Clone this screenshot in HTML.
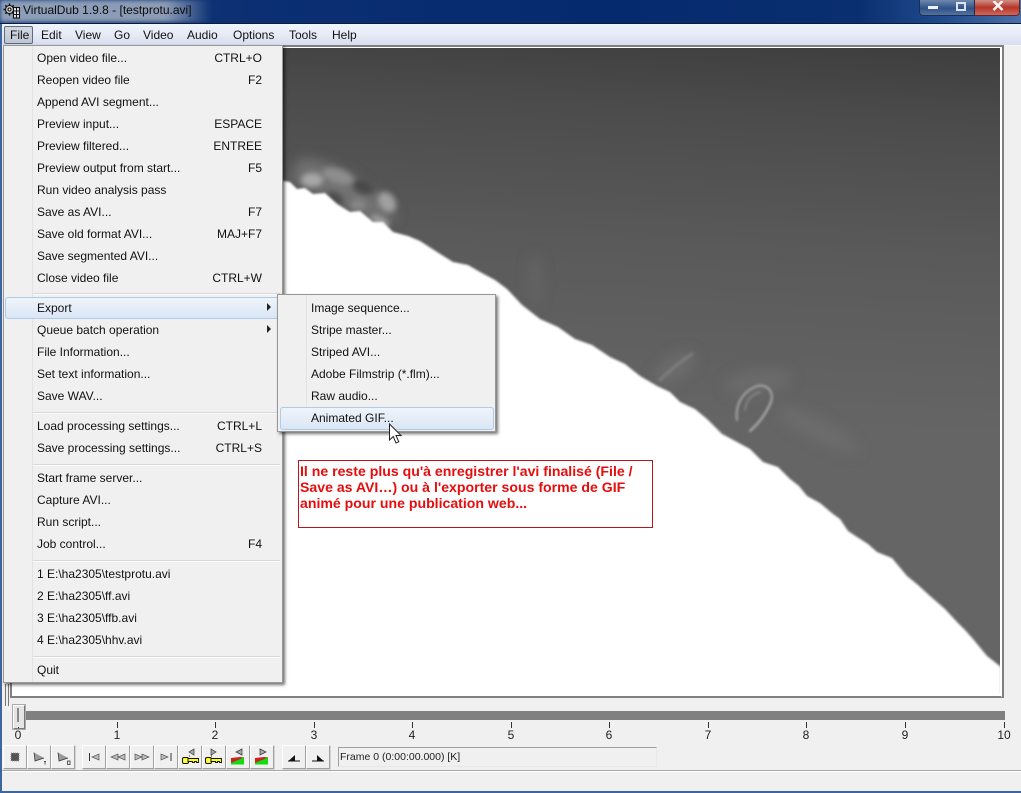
<!DOCTYPE html>
<html><head><meta charset="utf-8"><title>VirtualDub 1.9.8</title>
<style>
html,body{margin:0;padding:0;width:1021px;height:793px;overflow:hidden;background:#f0f0f0}
body{position:relative;font-family:"Liberation Sans",sans-serif;font-size:12px;color:#111}
div,span,svg{position:absolute}
.t{white-space:nowrap;line-height:14px;height:14px}
.r{white-space:nowrap;line-height:14px;height:14px;right:759px}
.m{top:28px;line-height:14px;white-space:nowrap;color:#111}
.sep{left:33px;width:247px;height:1px;background:#d9d9d9;border-bottom:1px solid #fbfbfb}
.n{top:728px;line-height:14px;width:14px;text-align:center;color:#222}
.k{top:722px;width:1px;height:6px;background:#333}
.b{top:745px;width:22px;height:22px;background:#f0f0f0;border:1px solid;border-color:#fff #a0a0a0 #a0a0a0 #fff;box-shadow:1px 1px 0 #d4d4d4}
.b svg{left:0;top:0}
</style></head><body>

<!-- title bar -->
<div style="left:0;top:0;width:1021px;height:24px;background:linear-gradient(90deg,#123a7c 0,#0b2f72 25%,#052a6e 60%,#0a2f70 84%,#1f4a8c 92%,#4a6ea8 100%)"></div>
<div style="left:0;top:0;width:212px;height:22px;background:linear-gradient(90deg,#8e9fb8 0,#8c9bb6 78%,rgba(120,140,175,0) 100%);filter:blur(2px)"></div>
<svg style="left:3px;top:2px" width="18" height="18" viewBox="0 0 18 18"><g fill="none" stroke="#111" stroke-width="1.1"><circle cx="6.500" cy="7.500" r="4" fill="#ccc"/><circle cx="6.500" cy="7.500" r="1.500" fill="#fff"/><path d="M6.500 1.500V3.500M6.500 11.500V13.500M.5 7.500H2.500M2.300 3.300L3.700 4.700M9.300 10.300L10.700 11.700M2.300 11.700L3.700 10.300M9.300 4.700L10.700 3.300" stroke-width="1.500"/><rect x="10.500" y="5.500" width="6" height="10.500" fill="#eee"/><path d="M10.500 9H16.500M10.500 12.500H16.500M13.500 5.500V16"/></g></svg>
<div class="t" style="left:23px;top:3px;color:#0c0c0c;font-size:12px">VirtualDub 1.9.8 - [testprotu.avi]</div>
<!-- caption buttons -->
<div style="left:919px;top:-1px;width:28px;height:15px;background:linear-gradient(#6f87ad,#2f5288 55%,#54729f);border:1px solid #1c2f50;border-radius:0 0 0 4px"></div>
<div style="left:948px;top:-1px;width:26px;height:15px;background:linear-gradient(#6f87ad,#2f5288 55%,#54729f);border:1px solid #1c2f50;border-left:0"></div>
<div style="left:975px;top:-1px;width:44px;height:15px;background:linear-gradient(#cf8f85,#b8352a 50%,#cc6a5c);border:1px solid #5a2a30;border-left:0;border-radius:0 0 4px 0"></div>
<div style="left:928px;top:6px;width:10px;height:3px;background:#eef2f8"></div>
<div style="left:956px;top:2px;width:6px;height:5px;border:2px solid #dde4ef"></div>
<svg style="left:992px;top:1px" width="12" height="10" viewBox="0 0 12 10"><path d="M1.500 0L10.500 9M10.500 0L1.500 9" stroke="#f4f4f4" stroke-width="2.600"/></svg>

<!-- window frame -->
<div style="left:0;top:23px;width:1021px;height:1px;background:#0c1c3c"></div>
<div style="left:0;top:24px;width:2px;height:769px;background:#3d659e"></div>
<div style="left:0;top:791px;width:1021px;height:2px;background:#3d659e"></div>
<div style="left:2px;top:24px;width:1019px;height:21px;background:linear-gradient(#f1f4fc,#e6ebf7 50%,#d6ddee)"></div>
<div style="left:2px;top:45px;width:1019px;height:1px;background:#f6f6f6"></div>
<div style="left:4px;top:26px;width:27px;height:16px;border:1px solid #5f6a7c;border-radius:2px;background:linear-gradient(#d3d9e4,#bfc6d4)"></div>
<div class="m" style="left:10px">File</div>
<div class="m" style="left:41px">Edit</div>
<div class="m" style="left:75px">View</div>
<div class="m" style="left:114px">Go</div>
<div class="m" style="left:143px">Video</div>
<div class="m" style="left:187px">Audio</div>
<div class="m" style="left:233px">Options</div>
<div class="m" style="left:289px">Tools</div>
<div class="m" style="left:332px">Help</div>

<!-- video pane -->
<svg style="left:0;top:0" width="1021" height="793" viewBox="0 0 1021 793">
<defs>
<linearGradient id="g" gradientUnits="userSpaceOnUse" x1="700" y1="420" x2="720" y2="40">
<stop offset="0" stop-color="#656565"/><stop offset=".45" stop-color="#5a5a5a"/><stop offset=".8" stop-color="#4c4c4c"/><stop offset="1" stop-color="#3f3f3f"/>
</linearGradient>
<filter id="b1" x="-20%" y="-20%" width="140%" height="140%"><feGaussianBlur stdDeviation="1"/></filter>
<filter id="b15" x="-40%" y="-40%" width="180%" height="180%"><feGaussianBlur stdDeviation="1.300"/></filter>
<filter id="b3" x="-50%" y="-50%" width="200%" height="200%"><feGaussianBlur stdDeviation="3"/></filter>
<filter id="b2" x="-20%" y="-20%" width="140%" height="140%"><feGaussianBlur stdDeviation="2.500"/></filter>
<filter id="b4" x="-40%" y="-40%" width="180%" height="180%"><feGaussianBlur stdDeviation="6"/></filter>
<clipPath id="c"><rect x="14" y="48" width="986" height="645"/></clipPath>
</defs>
<rect x="11" y="46" width="992" height="651" fill="#fff" stroke="#808080" stroke-width="2"/>
<g clip-path="url(#c)">
<rect x="14" y="48" width="986" height="645" fill="url(#g)"/>
<!-- broad surface detail -->
<g filter="url(#b4)">
<path d="M300 158C330 160 365 178 398 216L375 225C345 205 320 195 290 180Z" fill="#727272"/>
<ellipse cx="535" cy="280" rx="7" ry="26" fill="#646464"/>
<ellipse cx="675" cy="368" rx="24" ry="12" fill="#6c6c6c" transform="rotate(-35 675 368)"/>
<ellipse cx="818" cy="430" rx="46" ry="11" fill="#6c6c6c" transform="rotate(28 818 430)"/>
<ellipse cx="758" cy="382" rx="34" ry="13" fill="#6b6b6b" transform="rotate(-8 758 382)"/>
</g>
<g filter="url(#b3)">
<ellipse cx="312" cy="180" rx="11" ry="7" fill="#a8a8a8"/>
<ellipse cx="338" cy="176" rx="16" ry="7" fill="#8e8e8e" transform="rotate(18 338 176)"/>
<ellipse cx="387" cy="202" rx="8" ry="11" fill="#a0a0a0" transform="rotate(-35 387 202)"/>
<ellipse cx="380" cy="221" rx="10" ry="4" fill="#a4a4a4" transform="rotate(25 380 221)"/>
<ellipse cx="358" cy="205" rx="8" ry="6" fill="#868686"/>
<ellipse cx="363" cy="187" rx="11" ry="7" fill="#4a4a4a" transform="rotate(20 363 187)"/>
<ellipse cx="335" cy="198" rx="9" ry="5" fill="#4c4c4c" transform="rotate(30 335 198)"/>
</g>
<g filter="url(#b15)" fill="none" stroke-linecap="round">
<path d="M737 420C735 405 742 392 757 386C768 384 774 392 771 402" stroke="#a8a8a8" stroke-width="2"/>
<path d="M771 402C766 414 758 424 750 431" stroke="#b4b4b4" stroke-width="2"/>
<path d="M745 410C746 400 752 394 760 392" stroke="#858585" stroke-width="2"/>
<path d="M660 380C668 372 680 362 692 354" stroke="#7e7e7e" stroke-width="3"/>
</g>
<!-- sun disk -->
<path d="M0 170L283 180L297 190L313 195L337 205L350 213L373 223L393 233L420 242L437 253L453 263L480 273L507 290L540 320L575 340L610 358L640 377L657 387L680 403L707 420L737 443L763 463L790 480L807 497L833 515L840 520L857 538L877 553L907 577L930 597L957 623L973 640L987 657L1001 668L1001 700L0 700Z" fill="#7a7a7a" filter="url(#b2)" opacity=".35"/>
<path d="M0 172L283 181L290 182L297 189L305 188L313 194L325 193L337 204L350 212L360 211L373 222L383 222L393 232L408 236L420 241L437 252L453 262L468 265L480 272L495 280L507 289L522 305L540 319L558 327L575 339L592 345L610 357L625 364L640 376L657 386L670 392L680 402L695 409L707 419L722 434L737 442L750 449L763 462L778 467L790 479L799 486L807 496L820 503L833 514L840 519L848 531L857 537L868 544L877 552L892 558L907 576L918 585L930 596L945 609L957 622L965 630L973 639L987 656L1001 667L1001 700L0 700Z" fill="#fff" filter="url(#b1)"/>
</g>
<rect x="1001" y="47" width="1" height="650" fill="#fff" opacity=".6"/>
</svg>
<div style="left:5px;top:684px;width:1px;height:22px;background:#777"></div>
<div style="left:8px;top:684px;width:1px;height:22px;background:#777"></div>

<!-- annotation -->
<div style="left:298px;top:460px;width:353px;height:66px;background:#fff;border:1px solid #b8141a"></div>
<div style="left:300px;top:463px;width:350px;color:#e60d0d;font-weight:bold;font-size:14.100px;line-height:16px;white-space:nowrap">Il ne reste plus qu'à enregistrer l'avi finalisé (File /<br>Save as AVI…) ou à l'exporter sous forme de GIF<br>animé pour une publication web...</div>

<!-- File menu -->
<div style="left:3px;top:45px;width:278px;height:636px;background:#f0f0f0;border:1px solid #979797;box-shadow:2px 2px 3px rgba(0,0,0,.55)"></div>
<div style="left:32px;top:46px;width:1px;height:636px;background:#e2e3e3"></div>
<div class="sep" style="top:293px"></div>
<div class="sep" style="top:412px"></div>
<div class="sep" style="top:464px"></div>
<div class="sep" style="top:560px"></div>
<div class="sep" style="top:656px"></div>
<div style="left:5px;top:297px;width:272px;height:20px;border:1px solid #aecbe8;border-radius:3px;background:linear-gradient(#eff4fb,#dbe6f5)"></div>

<div class="t" style="left:37px;top:51px">Open video file...</div><div class="r" style="top:51px">CTRL+O</div>
<div class="t" style="left:37px;top:73px">Reopen video file</div><div class="r" style="top:73px">F2</div>
<div class="t" style="left:37px;top:95px">Append AVI segment...</div>
<div class="t" style="left:37px;top:117px">Preview input...</div><div class="r" style="top:117px">ESPACE</div>
<div class="t" style="left:37px;top:139px">Preview filtered...</div><div class="r" style="top:139px">ENTREE</div>
<div class="t" style="left:37px;top:161px">Preview output from start...</div><div class="r" style="top:161px">F5</div>
<div class="t" style="left:37px;top:183px">Run video analysis pass</div>
<div class="t" style="left:37px;top:205px">Save as AVI...</div><div class="r" style="top:205px">F7</div>
<div class="t" style="left:37px;top:227px">Save old format AVI...</div><div class="r" style="top:227px">MAJ+F7</div>
<div class="t" style="left:37px;top:249px">Save segmented AVI...</div>
<div class="t" style="left:37px;top:271px">Close video file</div><div class="r" style="top:271px">CTRL+W</div>
<div class="t" style="left:37px;top:301px">Export</div>
<div class="t" style="left:37px;top:323px">Queue batch operation</div>
<div class="t" style="left:37px;top:345px">File Information...</div>
<div class="t" style="left:37px;top:367px">Set text information...</div>
<div class="t" style="left:37px;top:389px">Save WAV...</div>
<div class="t" style="left:37px;top:419px">Load processing settings...</div><div class="r" style="top:419px">CTRL+L</div>
<div class="t" style="left:37px;top:441px">Save processing settings...</div><div class="r" style="top:441px">CTRL+S</div>
<div class="t" style="left:37px;top:471px">Start frame server...</div>
<div class="t" style="left:37px;top:493px">Capture AVI...</div>
<div class="t" style="left:37px;top:515px">Run script...</div>
<div class="t" style="left:37px;top:537px">Job control...</div><div class="r" style="top:537px">F4</div>
<div class="t" style="left:37px;top:567px">1 E:\ha2305\testprotu.avi</div>
<div class="t" style="left:37px;top:589px">2 E:\ha2305\ff.avi</div>
<div class="t" style="left:37px;top:611px">3 E:\ha2305\ffb.avi</div>
<div class="t" style="left:37px;top:633px">4 E:\ha2305\hhv.avi</div>
<div class="t" style="left:37px;top:663px">Quit</div>
<svg style="left:266px;top:303px" width="6" height="34" viewBox="0 0 6 34"><path d="M1 0L5 4L1 8ZM1 22L5 26L1 30Z" fill="#222"/></svg>

<!-- Export submenu -->
<div style="left:277px;top:294px;width:217px;height:136px;background:#f0f0f0;border:1px solid #979797;box-shadow:2px 2px 3px rgba(0,0,0,.55)"></div>
<div style="left:306px;top:295px;width:1px;height:135px;background:#e2e3e3"></div>
<div style="left:280px;top:407px;width:212px;height:21px;border:1px solid #aecbe8;border-radius:3px;background:linear-gradient(#eff4fb,#dbe6f5)"></div>
<div class="t" style="left:311px;top:301px">Image sequence...</div>
<div class="t" style="left:311px;top:323px">Stripe master...</div>
<div class="t" style="left:311px;top:345px">Striped AVI...</div>
<div class="t" style="left:311px;top:367px">Adobe Filmstrip (*.flm)...</div>
<div class="t" style="left:311px;top:389px">Raw audio...</div>
<div class="t" style="left:311px;top:411px">Animated GIF...</div>
<svg style="left:388px;top:423px" width="16" height="22" viewBox="0 0 16 22"><path d="M1.500 1V17L5.200 13.500L8 20L10.800 18.800L8 12.500H13Z" fill="#fff" stroke="#222" stroke-width="1"/></svg>

<!-- timeline -->
<div style="left:22px;top:711px;width:983px;height:9px;background:#808080"></div>
<div style="left:13px;top:705px;width:10px;height:22px;background:#e4e4e4;border:1px solid;border-color:#fff #777 #777 #fff;box-shadow:0 0 0 1px #aaa"></div>
<div style="left:17px;top:708px;width:2px;height:14px;background:#8a8a8a"></div>
<div class="k" style="left:18px;top:727px;height:1px"></div>
<div class="k" style="left:117px"></div><div class="k" style="left:215px"></div><div class="k" style="left:314px"></div><div class="k" style="left:412px"></div><div class="k" style="left:511px"></div><div class="k" style="left:609px"></div><div class="k" style="left:708px"></div><div class="k" style="left:806px"></div><div class="k" style="left:905px"></div><div class="k" style="left:1004px"></div>
<div class="n" style="left:11px">0</div><div class="n" style="left:110px">1</div><div class="n" style="left:208px">2</div><div class="n" style="left:307px">3</div><div class="n" style="left:405px">4</div><div class="n" style="left:504px">5</div><div class="n" style="left:602px">6</div><div class="n" style="left:701px">7</div><div class="n" style="left:799px">8</div><div class="n" style="left:898px">9</div><div class="n" style="left:995px;width:18px">10</div>

<!-- toolbar -->
<div class="b" style="left:3px"><svg width="22" height="22"><rect x="7" y="7" width="8" height="8" fill="#555" stroke="#999" stroke-dasharray="1 1"/></svg></div>
<div class="b" style="left:27px"><svg width="22" height="22"><path d="M6 6.500L16 12L7 15Z" fill="#999"/><path d="M6 6.500L7 15L16 12" fill="none" stroke="#333" stroke-width=".7"/><path d="M16 15.500H18M17 15.500V18.500" fill="none" stroke="#333" stroke-width=".8"/></svg></div>
<div class="b" style="left:51px"><svg width="22" height="22"><path d="M6 6.500L16 12L7 15Z" fill="#999"/><path d="M6 6.500L7 15L16 12" fill="none" stroke="#333" stroke-width=".7"/><rect x="15.500" y="15" width="2.500" height="3.500" fill="none" stroke="#333" stroke-width=".8"/></svg></div>
<div class="b" style="left:82px"><svg width="22" height="22"><path d="M6.500 7V15" stroke="#333"/><path d="M16 8V14L9 11Z" fill="#bbb" stroke="#555" stroke-width=".7"/></svg></div>
<div class="b" style="left:106px"><svg width="22" height="22"><path d="M11 8V14L4 11ZM18 8V14L11 11Z" fill="#bbb" stroke="#555" stroke-width=".7"/></svg></div>
<div class="b" style="left:130px"><svg width="22" height="22"><path d="M4 8V14L11 11ZM11 8V14L18 11Z" fill="#bbb" stroke="#555" stroke-width=".7"/></svg></div>
<div class="b" style="left:154px"><svg width="22" height="22"><path d="M6 8V14L13 11Z" fill="#bbb" stroke="#555" stroke-width=".7"/><path d="M16 7V15" stroke="#333"/></svg></div>
<div class="b" style="left:178px"><svg width="22" height="22"><path d="M15 3V9L10 6Z" fill="#aaa" stroke="#333" stroke-width=".7"/><path d="M10 10H11" stroke="#333"/><rect x="3.500" y="11.500" width="6" height="6" rx="1.500" fill="#ff0" stroke="#111"/><path d="M9 12.500H19.500V16.500H17.500V15.500H15.500V16.500H13.500V15.500H9Z" fill="#ff0" stroke="#111" stroke-width=".9"/><rect x="5.500" y="13.500" width="2" height="2" fill="#f0f0f0"/></svg></div>
<div class="b" style="left:202px"><svg width="22" height="22"><path d="M8 3V9L13 6Z" fill="#aaa" stroke="#333" stroke-width=".7"/><path d="M8 10H9" stroke="#333"/><rect x="2.500" y="11.500" width="6" height="6" rx="1.500" fill="#ff0" stroke="#111"/><path d="M8 12.500H18.500V16.500H16.500V15.500H14.500V16.500H12.500V15.500H8Z" fill="#ff0" stroke="#111" stroke-width=".9"/><rect x="4.500" y="13.500" width="2" height="2" fill="#f0f0f0"/></svg></div>
<div class="b" style="left:226px"><svg width="22" height="22"><path d="M15 3V9L9 6Z" fill="#aaa" stroke="#333" stroke-width=".7"/><path d="M4 18.500V15L17 11V18.500Z" fill="#1d1"/><path d="M4 15.500V12L13 11L17 11.500L4 17Z" fill="#c22"/></svg></div>
<div class="b" style="left:250px"><svg width="22" height="22"><path d="M9 3V9L15 6Z" fill="#aaa" stroke="#333" stroke-width=".7"/><path d="M4 18.500V15L17 11V18.500Z" fill="#1d1"/><path d="M4 15.500V12L13 11L17 11.500L4 17Z" fill="#c22"/></svg></div>
<div class="b" style="left:282px"><svg width="22" height="22"><path d="M5 14.500H17V15.500H5Z" fill="#111"/><path d="M6 14.500L12 9V14.500Z" fill="#111"/></svg></div>
<div class="b" style="left:306px"><svg width="22" height="22"><path d="M5 14.500H17V15.500H5Z" fill="#111"/><path d="M16 14.500L10 9V14.500Z" fill="#111"/></svg></div>

<!-- frame field -->
<div style="left:338px;top:747px;width:319px;height:20px;border:1px solid #d8d8d8;border-color:#a0a0a0 #e8e8e8 #e8e8e8 #a0a0a0;box-sizing:border-box"></div>
<div class="t" style="left:340px;top:750px;font-size:10.500px;color:#222">Frame 0 (0:00:00.000) [K]</div>

<!-- status bar -->
<div style="left:2px;top:770px;width:1019px;height:1px;background:#a8a8a8"></div>
<div style="left:2px;top:771px;width:1019px;height:1px;background:#fff"></div>
</body></html>
